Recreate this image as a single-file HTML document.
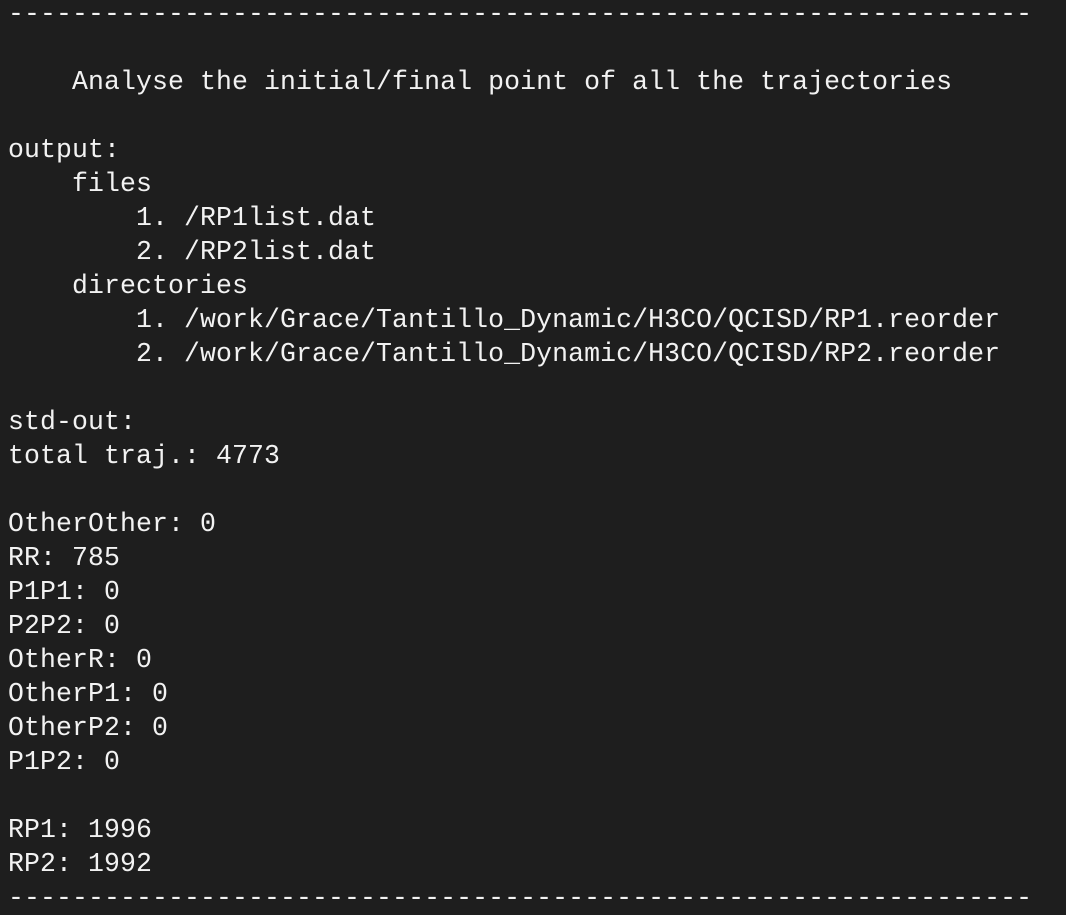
<!DOCTYPE html>
<html><head><meta charset="utf-8"><style>
html,body{margin:0;padding:0;background:#1e1e1e;width:1066px;height:910px;overflow:hidden}
pre{position:absolute;left:8px;top:-3px;margin:0;font-family:"Liberation Mono",monospace;font-size:26.5px;line-height:34px;color:#f2f2f2;letter-spacing:0.1px}
</style></head><body><pre>----------------------------------------------------------------

    Analyse the initial/final point of all the trajectories

output:
    files
        1. /RP1list.dat
        2. /RP2list.dat
    directories
        1. /work/Grace/Tantillo_Dynamic/H3CO/QCISD/RP1.reorder
        2. /work/Grace/Tantillo_Dynamic/H3CO/QCISD/RP2.reorder

std-out:
total traj.: 4773

OtherOther: 0
RR: 785
P1P1: 0
P2P2: 0
OtherR: 0
OtherP1: 0
OtherP2: 0
P1P2: 0

RP1: 1996
RP2: 1992
----------------------------------------------------------------</pre></body></html>
